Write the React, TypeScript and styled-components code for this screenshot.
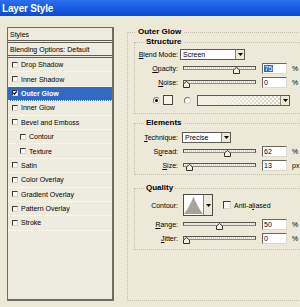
import React from "react";
import styled, { createGlobalStyle } from "styled-components";

const GlobalStyle = createGlobalStyle`
  html, body {
    margin: 0;
    padding: 0;
    background: #ece9d8;
  }
  body {
    font-family: "Liberation Sans", Arial, sans-serif;
    font-size: 7px;
    color: #000;
  }
`;

const Window = styled.div`
  width: 300px;
  height: 307px;
  overflow: hidden;
  background: #ece9d8;
  display: flex;
  flex-direction: column;
`;

const TitleBar = styled.div`
  height: 16px;
  flex: none;
  display: flex;
  align-items: center;
  padding-left: 2px;
  background: linear-gradient(#2f6ff0, #1258e0 60%, #0a4ad0);
  color: #fff;
  font: bold 10px "Liberation Sans", Arial, sans-serif;
  letter-spacing: -0.2px;
`;

const Body = styled.div`
  flex: 1;
  min-height: 0;
  display: flex;
  gap: 13px;
  padding: 11px 0 6px 7px;
`;

/* ---------- left list ---------- */

const StyleList = styled.div`
  width: 107px;
  flex: none;
  box-sizing: border-box;
  background: #eeebdf;
  border: 1px solid #6e6c63;
  border-right-width: 2px;
  border-bottom-width: 2px;
  display: flex;
  flex-direction: column;
`;

const ListHead = styled.div`
  height: 12px;
  display: flex;
  align-items: center;
  padding-left: 2px;
  border-bottom: 3px double #5f5d55;
`;

const ListItem = styled.div<{ $indent?: boolean; $active?: boolean }>`
  height: 13.4px;
  display: flex;
  align-items: center;
  gap: 3px;
  padding-left: ${(p) => (p.$indent ? 12 : 4)}px;
  border-bottom: 1px dotted #fff;
  background: ${(p) => (p.$active ? "#316ac5" : "transparent")};
  color: ${(p) => (p.$active ? "#fff" : "#000")};
  font-weight: ${(p) => (p.$active ? "bold" : "normal")};
`;

const Check = styled.span<{ $size?: number }>`
  width: ${(p) => p.$size ?? 6}px;
  height: ${(p) => p.$size ?? 6}px;
  flex: none;
  box-sizing: border-box;
  background: #fbfaf6;
  border-top: 1px solid #3c3c3c;
  border-left: 1px solid #3c3c3c;
  border-right: 1px solid #d8d5c8;
  border-bottom: 1px solid #d8d5c8;
  display: flex;
  align-items: center;
  justify-content: center;
`;

/* ---------- right panel ---------- */

const Group = styled.fieldset`
  margin: 0;
  min-width: 0;
  box-sizing: border-box;
  border: 1px dotted #c4c0af;
`;

const OuterGroup = styled(Group)`
  width: 190px;
  height: 274px;
  flex: none;
  padding: 0 6px 0 6px;
`;

const InnerGroup = styled(Group)<{ $top: number; $pt?: number; $pb: number }>`
  margin-top: ${(p) => p.$top}px;
  padding: ${(p) => p.$pt ?? 0}px 0 ${(p) => p.$pb}px 0;
`;

const Legend = styled.legend<{ $offset: number }>`
  font-weight: bold;
  font-size: 8px;
  line-height: 10px;
  padding: 0 2px;
  margin-left: ${(p) => p.$offset}px;
`;

const Row = styled.div<{ $h?: number; $mt?: number }>`
  height: ${(p) => p.$h ?? 14}px;
  margin-top: ${(p) => p.$mt ?? 0}px;
  display: flex;
  align-items: center;
`;

const Label = styled.span`
  width: 43px;
  flex: none;
  text-align: right;
  white-space: nowrap;
`;

const SliderBox = styled.div`
  position: relative;
  width: 73px;
  height: 12px;
  margin-left: 5px;
  flex: none;
`;

const Groove = styled.div`
  margin-top: 4px;
  height: 4px;
  box-sizing: border-box;
  border: 1px solid #57554d;
  border-bottom-color: #8d8a7f;
  background: repeating-linear-gradient(90deg, #f6f4ea 0 1px, #d9d6c8 1px 2px);
`;

const Thumb = styled.div`
  position: absolute;
  top: 5px;
  width: 7px;
  height: 7px;
  display: flex;
`;

const Field = styled.div`
  width: 25px;
  height: 11px;
  margin-left: 6px;
  flex: none;
  box-sizing: border-box;
  background: #fff;
  border-top: 1px solid #6a685f;
  border-left: 1px solid #6a685f;
  border-right: 1px solid #dcd9cc;
  border-bottom: 1px solid #dcd9cc;
  display: flex;
  align-items: center;
  padding-left: 1px;
`;

const Picked = styled.span`
  background: #316ac5;
  color: #fff;
  padding: 0 0.5px;
`;

const Unit = styled.span`
  margin-left: 5px;
`;

const SelectBox = styled.div<{ $w: number; $ml: number }>`
  width: ${(p) => p.$w}px;
  height: 11px;
  margin-left: ${(p) => p.$ml}px;
  flex: none;
  box-sizing: border-box;
  background: #fff;
  border: 1px solid #5c5a52;
  display: flex;
  align-items: center;
`;

const SelectText = styled.span`
  flex: 1;
  padding-left: 2px;
`;

const ArrowBtn = styled.span`
  width: 8px;
  align-self: stretch;
  flex: none;
  background: #ece9d8;
  border-left: 1px solid #8a877b;
  display: flex;
  align-items: center;
  justify-content: center;
`;

const Radio = styled.span<{ $on?: boolean }>`
  width: 7px;
  height: 7px;
  flex: none;
  box-sizing: border-box;
  border-radius: 50%;
  background: #fff;
  border: 1px solid #777469;
  border-bottom-color: #d6d3c6;
  border-right-color: #d6d3c6;
  display: flex;
  align-items: center;
  justify-content: center;
  &::after {
    content: "";
    width: 3px;
    height: 3px;
    border-radius: 50%;
    background: ${(p) => (p.$on ? "#000" : "transparent")};
  }
`;

const Swatch = styled.span`
  width: 10px;
  height: 10px;
  margin-left: 3px;
  flex: none;
  box-sizing: border-box;
  border: 1px solid #4a4843;
  background: #f6f3e4;
`;

const GradientBox = styled.div`
  width: 93px;
  height: 11px;
  margin-left: 6px;
  flex: none;
  box-sizing: border-box;
  border: 1px solid #5c5a52;
  display: flex;
`;

const GradientFill = styled.span`
  flex: 1;
  background: linear-gradient(to right, #f3f1e6 15%, rgba(243, 241, 230, 0) 100%),
    repeating-conic-gradient(#d3d1c9 0 25%, #fbfbf8 0 50%) 0 0 / 4px 4px;
`;

const ContourBox = styled.div`
  width: 30px;
  height: 22px;
  margin-left: 5px;
  flex: none;
  box-sizing: border-box;
  border: 1px solid #4f4d46;
  background: #fff;
  display: flex;
`;

const AntiAlias = styled.div`
  display: flex;
  align-items: center;
  gap: 3px;
  margin-left: 10px;
`;

const Arrow = () => (
  <svg width="5" height="3" viewBox="0 0 5 3">
    <path d="M0 0H5L2.5 3Z" fill="#000" />
  </svg>
);

const Slider = ({ value, max = 100 }: { value: number; max?: number }) => (
  <SliderBox>
    <Groove />
    <Thumb style={{ left: `${(value / max) * 66}px` }}>
      <svg width="7" height="7" viewBox="0 0 7 7">
        <path d="M0.5 6.5V3L3.5 0.5L6.5 3V6.5Z" fill="#f1efe4" stroke="#34332f" />
      </svg>
    </Thumb>
  </SliderBox>
);

const SliderRow = ({
  label,
  value,
  max,
  unit = "%",
  picked,
}: {
  label: React.ReactNode;
  value: number;
  max?: number;
  unit?: string;
  picked?: boolean;
}) => (
  <Row>
    <Label>{label}</Label>
    <Slider value={value} max={max} />
    <Field>{picked ? <Picked>{value}</Picked> : value}</Field>
    <Unit>{unit}</Unit>
  </Row>
);

const items: { name: string; indent?: boolean; active?: boolean }[] = [
  { name: "Drop Shadow" },
  { name: "Inner Shadow" },
  { name: "Outer Glow", active: true },
  { name: "Inner Glow" },
  { name: "Bevel and Emboss" },
  { name: "Contour", indent: true },
  { name: "Texture", indent: true },
  { name: "Satin" },
  { name: "Color Overlay" },
  { name: "Gradient Overlay" },
  { name: "Pattern Overlay" },
  { name: "Stroke" },
];

export default function App() {
  return (
    <>
      <GlobalStyle />
      <Window>
        <TitleBar>Layer Style</TitleBar>
        <Body>
          <StyleList>
            <ListHead>Styles</ListHead>
            <ListHead>Blending Options: Default</ListHead>
            {items.map((it) => (
              <ListItem key={it.name} $indent={it.indent} $active={it.active}>
                <Check>
                  {it.active && (
                    <svg width="4" height="4" viewBox="0 0 4 4">
                      <path d="M0.3 1.8L1.5 3.2L3.7 0.4" fill="none" stroke="#000" strokeWidth="1.1" />
                    </svg>
                  )}
                </Check>
                {it.name}
              </ListItem>
            ))}
          </StyleList>

          <OuterGroup>
            <Legend $offset={2}>Outer Glow</Legend>

            <InnerGroup $top={0} $pb={6}>
              <Legend $offset={9}>Structure</Legend>
              <Row>
                <Label>
                  <u>B</u>lend Mode:
                </Label>
                <SelectBox $w={65} $ml={2}>
                  <SelectText>Screen</SelectText>
                  <ArrowBtn>
                    <Arrow />
                  </ArrowBtn>
                </SelectBox>
              </Row>
              <SliderRow
                label={
                  <>
                    <u>O</u>pacity:
                  </>
                }
                value={75}
                picked
              />
              <SliderRow
                label={
                  <>
                    <u>N</u>oise:
                  </>
                }
                value={0}
              />
              <Row $mt={4}>
                <Radio $on style={{ marginLeft: 18 }} />
                <Swatch />
                <Radio style={{ marginLeft: 11 }} />
                <GradientBox>
                  <GradientFill />
                  <ArrowBtn>
                    <Arrow />
                  </ArrowBtn>
                </GradientBox>
              </Row>
            </InnerGroup>

            <InnerGroup $top={4} $pt={2} $pb={2}>
              <Legend $offset={9}>Elements</Legend>
              <Row>
                <Label>
                  <u>T</u>echnique:
                </Label>
                <SelectBox $w={49} $ml={4}>
                  <SelectText>Precise</SelectText>
                  <ArrowBtn>
                    <Arrow />
                  </ArrowBtn>
                </SelectBox>
              </Row>
              <SliderRow
                label={
                  <>
                    S<u>p</u>read:
                  </>
                }
                value={62}
              />
              <SliderRow
                label={
                  <>
                    <u>S</u>ize:
                  </>
                }
                value={13}
                max={250}
                unit="px"
              />
            </InnerGroup>

            <InnerGroup $top={8} $pb={4}>
              <Legend $offset={9}>Quality</Legend>
              <Row $h={24}>
                <Label>Contour:</Label>
                <ContourBox>
                  <svg width="21" height="20" viewBox="0 0 21 20">
                    <path d="M0 20Q6 12 10.5 0.5Q15 12 21 20Z" fill="#a7a49b" />
                  </svg>
                  <ArrowBtn>
                    <Arrow />
                  </ArrowBtn>
                </ContourBox>
                <AntiAlias>
                  <Check $size={8} />
                  <span>
                    Anti-a<u>l</u>iased
                  </span>
                </AntiAlias>
              </Row>
              <SliderRow
                label={
                  <>
                    <u>R</u>ange:
                  </>
                }
                value={50}
              />
              <SliderRow
                label={
                  <>
                    <u>J</u>itter:
                  </>
                }
                value={0}
              />
            </InnerGroup>
          </OuterGroup>
        </Body>
      </Window>
    </>
  );
}
